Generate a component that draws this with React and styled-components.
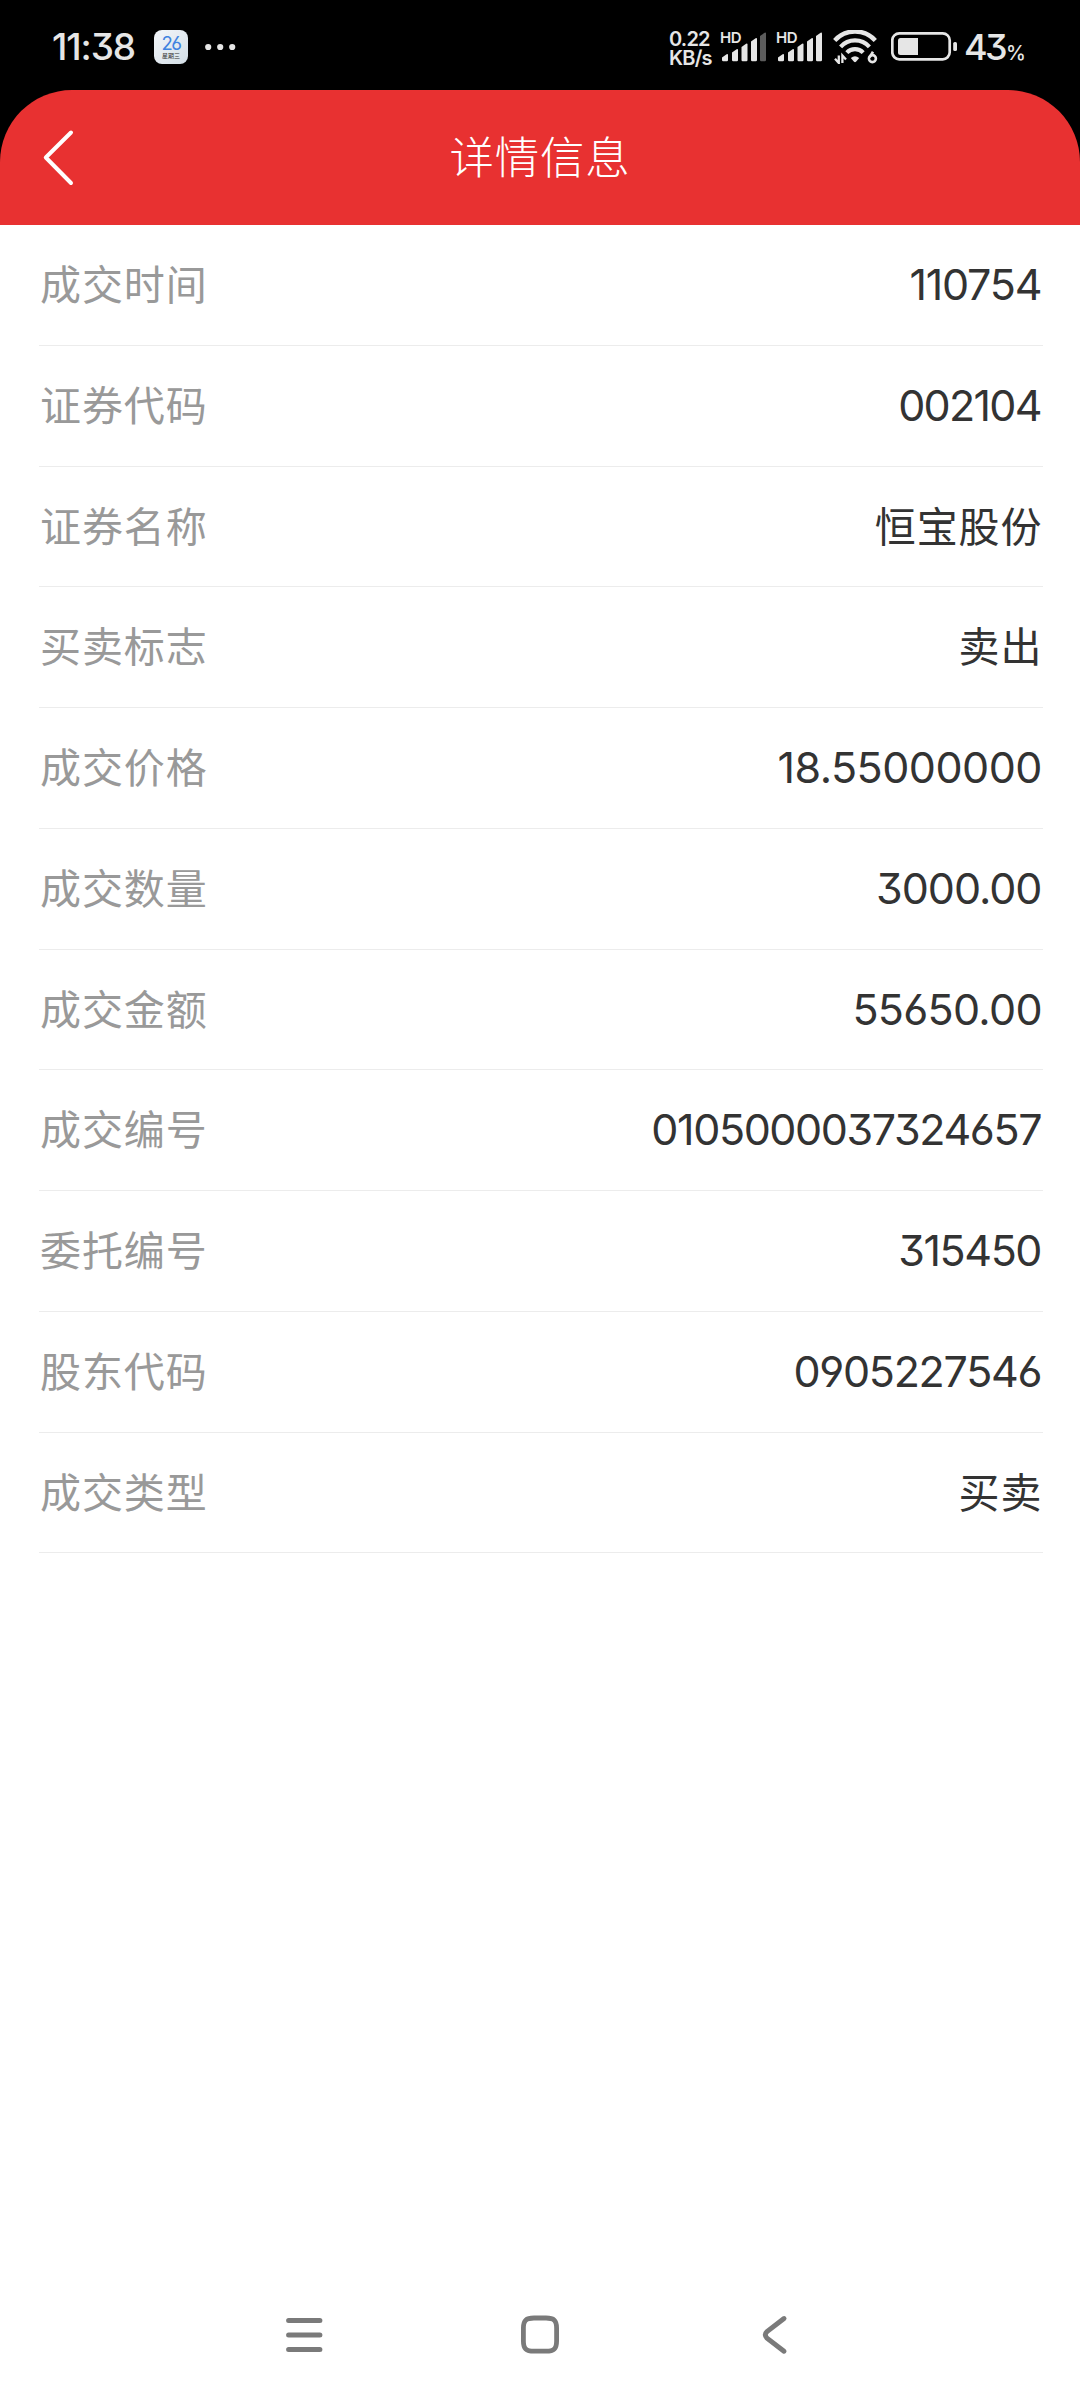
import React from 'react';
import styled, { createGlobalStyle } from 'styled-components';

const GlobalStyle = createGlobalStyle`
  * { box-sizing: border-box; }
  body {
    margin: 0;
    background: #fff;
    font-family: Inter, "Noto Sans CJK SC", sans-serif;
    font-feature-settings: "cv03", "cv04", "cv09";
  }
  svg { display: block; flex: none; }
`;

const Screen = styled.div`
  display: flex;
  flex-direction: column;
  width: 1080px;
  height: 2400px;
  background: #fff;
`;

const TopArea = styled.div`
  background: #000;
`;

const StatusBar = styled.div`
  display: flex;
  align-items: flex-start;
  height: 90px;
  padding: 30px 53px 0 52px;
  color: #e6e6e6;
`;

const Clock = styled.div`
  width: 102px;
  height: 34px;
  font-size: 37px;
  line-height: 34px;
  font-weight: 500;
  letter-spacing: -1.1px;
  white-space: nowrap;
`;

const CalendarIcon = styled.div`
  display: flex;
  flex-direction: column;
  align-items: center;
  width: 34px;
  height: 34px;
  margin-right: 17px;
  padding-top: 4px;
  border-radius: 8px;
  background: linear-gradient(135deg, #f4f7fa, #d3dee6);
`;

const CalendarDay = styled.div`
  height: 18px;
  font-size: 18.5px;
  line-height: 18px;
  letter-spacing: -1.4px;
  color: #3f83e0;
`;

const CalendarWeekday = styled.div`
  height: 7px;
  font-size: 6px;
  line-height: 7px;
  color: #333;
`;

const StatusRight = styled.div`
  display: flex;
  align-items: flex-start;
  margin-left: auto;
`;

const NetSpeed = styled.div`
  width: 51px;
  font-size: 20px;
  line-height: 19px;
  font-weight: 600;
  letter-spacing: -0.8px;
  white-space: nowrap;
`;

const Signal = styled.div`
  display: flex;
  flex-direction: column;
  width: 56px;
  height: 34px;
`;

const HdTag = styled.div`
  height: 0;
  font-size: 15px;
  line-height: 15px;
  font-weight: 600;
  letter-spacing: -0.5px;
`;

const Percent = styled.div`
  display: flex;
  align-items: baseline;
  width: 61px;
  height: 34px;
  margin-left: -2px;
  margin-right: 2px;
  font-size: 36px;
  line-height: 34px;
  font-weight: 500;
  letter-spacing: -2.6px;
`;

const PercentSign = styled.span`
  margin-left: 1px;
  font-size: 20px;
  letter-spacing: -1px;
`;

const Header = styled.header`
  display: grid;
  grid-template-columns: 120px 1fr 120px;
  align-items: center;
  height: 135px;
  border-radius: 72px 72px 0 0;
  background: #e83131;
`;

const BackButton = styled.div`
  padding-left: 40px;
`;

const Title = styled.h1`
  margin: 1px 0 0;
  text-align: center;
  font-size: 44.5px;
  line-height: 60px;
  font-weight: 300;
  letter-spacing: 0.8px;
  color: #fff;
`;

const List = styled.div`
  flex: 1;
  padding: 0 37px 0 39px;
`;

const Row = styled.div`
  display: flex;
  align-items: center;
  justify-content: space-between;
  height: 121px;
  border-bottom: 1px solid #ececec;

  &:nth-child(4n + 3) { height: 120px; }
`;

const Label = styled.div`
  padding-left: 1px;
  font-size: 41px;
  line-height: 60px;
  letter-spacing: 0.9px;
  color: #999;
`;

const Value = styled.div`
  margin: ${(p) => (p.$text ? 0 : -2)}px ${(p) => (p.$text ? 1.5 : 0.5) - p.$tracking}px 0 0;
  font-size: ${(p) => (p.$text ? 41 : 43)}px;
  line-height: 60px;
  letter-spacing: ${(p) => p.$tracking}px;
  color: #333;
`;

const NavBar = styled.nav`
  display: flex;
  align-items: center;
  justify-content: space-between;
  height: 130px;
  padding: 0 282px;
`;

const rows = [
  { label: '成交时间', value: '110754', tracking: -1.2 },
  { label: '证券代码', value: '002104', tracking: -1.7 },
  { label: '证券名称', value: '恒宝股份', text: true, tracking: 0.9 },
  { label: '买卖标志', value: '卖出', text: true, tracking: 0.9 },
  { label: '成交价格', value: '18.55000000', tracking: -0.5 },
  { label: '成交数量', value: '3000.00', tracking: -1 },
  { label: '成交金额', value: '55650.00', tracking: -0.7 },
  { label: '成交编号', value: '0105000037324657', tracking: -1.4 },
  { label: '委托编号', value: '315450', tracking: -1.4 },
  { label: '股东代码', value: '0905227546', tracking: -1.3 },
  { label: '成交类型', value: '买卖', text: true, tracking: 0.9 },
];

const bars = [
  [2, 25],
  [12, 20],
  [21.5, 14.5],
  [31, 9],
  [40, 3.5],
];

function SignalBars({ level }) {
  return (
    <Signal>
      <HdTag>HD</HdTag>
      <svg width="56" height="34" viewBox="0 0 56 34">
        {bars.map(([x, y], i) => (
          <path
            key={x}
            d={`M${x} ${y + 2.5} L${x + 4.6} ${y - 0.8} Q${x + 6} ${y - 1.4} ${x + 6} ${y} V30 Q${x + 6} 31.3 ${x + 4.8} 31.3 H${x + 1.2} Q${x} 31.3 ${x} 30 Z`}
            fill={i < level ? '#e6e6e6' : '#5c5c5c'}
          />
        ))}
      </svg>
    </Signal>
  );
}

export default function App() {
  return (
    <Screen>
      <GlobalStyle />
      <TopArea>
        <StatusBar>
          <Clock>11:38</Clock>
          <CalendarIcon>
            <CalendarDay>26</CalendarDay>
            <CalendarWeekday>星期三</CalendarWeekday>
          </CalendarIcon>
          <svg width="32" height="34" viewBox="0 0 32 34" fill="#e6e6e6">
            <circle cx="3.2" cy="17" r="3.1" />
            <circle cx="15.2" cy="17" r="3.1" />
            <circle cx="27.2" cy="17" r="3.1" />
          </svg>
          <StatusRight>
            <NetSpeed>
              0.22
              <br />
              KB/s
            </NetSpeed>
            <SignalBars level={4} />
            <SignalBars level={5} />
            <svg width="59" height="34" viewBox="0 0 59 34" fill="none" stroke="#e6e6e6">
              <path d="M2.7 10.4 A27.5 27.5 0 0 1 43.3 10.4" strokeWidth="4.4" />
              <path d="M8.6 16.8 A19.5 19.5 0 0 1 37.4 16.8" strokeWidth="4.2" />
              <path d="M14.8 22.6 A11.5 11.5 0 0 1 31.2 22.6" strokeWidth="4.2" />
              <path d="M18.8 28 Q23 24.4 27.2 28 L24 31.8 Q23 32.6 22 31.8 Z" fill="#e6e6e6" stroke="none" />
              <path d="M6.8 25.4 V33 L3 28.8 M10.4 33 V25.4 L14 29.4" strokeWidth="2.3" />
              <path d="M41 21.8 L37.6 27.2" strokeWidth="2.6" />
              <circle cx="40.4" cy="28.6" r="3.5" strokeWidth="2.6" />
            </svg>
            <svg width="75" height="34" viewBox="0 0 75 34">
              <rect x="1.3" y="3.3" width="57.4" height="26" rx="7" fill="none" stroke="#e6e6e6" strokeWidth="2.7" />
              <path d="M9.5 8 H27 V25 H9.5 Q7 25 7 22.5 V10.5 Q7 8 9.5 8 Z" fill="#e6e6e6" />
              <rect x="62.2" y="12" width="3.8" height="9" rx="1.6" fill="#e6e6e6" />
            </svg>
            <Percent>
              43<PercentSign>%</PercentSign>
            </Percent>
          </StatusRight>
        </StatusBar>
        <Header>
          <BackButton>
            <svg width="36" height="60" viewBox="0 0 36 60" fill="none" stroke="#fff" strokeWidth="4" strokeLinecap="round" strokeLinejoin="round">
              <path d="M31 4.5 L5.8 29.5 L31 55" />
            </svg>
          </BackButton>
          <Title>详情信息</Title>
        </Header>
      </TopArea>
      <List>
        {rows.map((r) => (
          <Row key={r.label}>
            <Label>{r.label}</Label>
            <Value $text={r.text} $tracking={r.tracking}>{r.value}</Value>
          </Row>
        ))}
      </List>
      <NavBar>
        <svg width="44" height="44" viewBox="0 0 44 44" stroke="#7a7a7a" strokeWidth="5" strokeLinecap="round">
          <path d="M6.6 7.5 H37.9 M6.6 22 H37.9 M6.6 36.5 H37.9" />
        </svg>
        <svg width="44" height="44" viewBox="0 0 44 44" fill="none" stroke="#7a7a7a" strokeWidth="4.8">
          <path d="M22 5 H28 C36 5 38.6 7.4 38.6 15 V28 C38.6 35.8 36 38.2 28 38.2 H16 C8 38.2 5.4 35.8 5.4 28 V15 C5.4 7.4 8 5 16 5 Z" />
        </svg>
        <svg width="44" height="44" viewBox="0 0 44 44" fill="none" stroke="#7a7a7a" strokeWidth="5" strokeLinecap="round">
          <path d="M30 5.6 L13 18.6 Q9.6 21.8 13 25.2 L30 38.2" />
        </svg>
      </NavBar>
    </Screen>
  );
}
